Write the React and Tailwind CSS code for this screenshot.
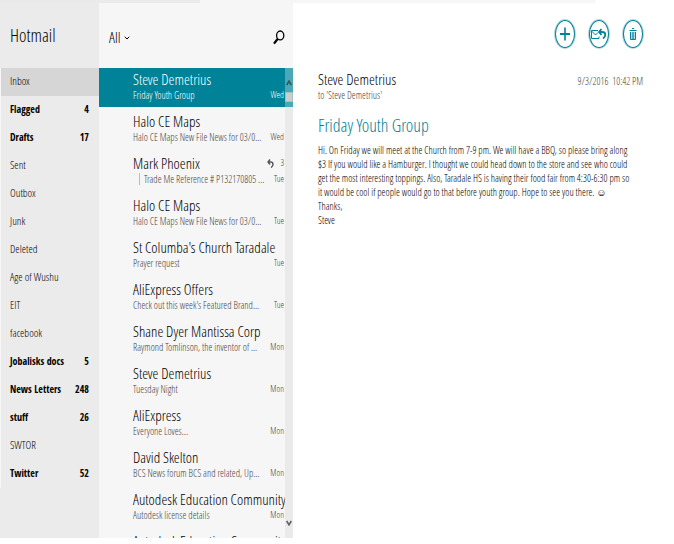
import { ChevronDown } from 'lucide-react'

const folders = [
  { name: 'Inbox', active: true },
  { name: 'Flagged', count: 4 },
  { name: 'Drafts', count: 17 },
  { name: 'Sent' },
  { name: 'Outbox' },
  { name: 'Junk' },
  { name: 'Deleted' },
  { name: 'Age of Wushu' },
  { name: 'EIT' },
  { name: 'facebook' },
  { name: 'Jobalisks docs', count: 5 },
  { name: 'News Letters', count: 248 },
  { name: 'stuff', count: 26 },
  { name: 'SWTOR' },
  { name: 'Twitter', count: 52 },
]

const messages = [
  { from: 'Steve Demetrius', preview: 'Friday Youth Group', day: 'Wed', active: true },
  { from: 'Halo CE Maps', preview: 'Halo CE Maps New File News for 03/0...', day: 'Wed' },
  { from: 'Mark Phoenix', preview: 'Trade Me Reference # P132170805 ...', day: 'Tue', replies: 3 },
  { from: 'Halo CE Maps', preview: 'Halo CE Maps New File News for 03/0...', day: 'Tue' },
  { from: "St Columba's Church Taradale", preview: 'Prayer request', day: 'Tue' },
  { from: 'AliExpress Offers', preview: "Check out this week's Featured Brand...", day: 'Tue' },
  { from: 'Shane Dyer Mantissa Corp', preview: 'Raymond Tomlinson, the inventor of ...', day: 'Mon' },
  { from: 'Steve Demetrius', preview: 'Tuesday Night', day: 'Mon' },
  { from: 'AliExpress', preview: 'Everyone Loves...', day: 'Mon' },
  { from: 'David Skelton', preview: 'BCS News forum BCS and related, Up...', day: 'Mon' },
  { from: 'Autodesk Education Community', preview: 'Autodesk license details', day: 'Mon' },
  { from: 'Autodesk Education Community' },
]

function ReplyIcon() {
  return (
    <svg width="7" height="9" viewBox="0 0 7 9" fill="none" stroke="#555" strokeWidth="1.4">
      <path d="M3 0.5 1 3l2 2.5M1 3h2.5C7 3 6.5 7 4 8.5" />
    </svg>
  )
}

function FolderRow({ folder }) {
  return (
    <li>
      <a
        href="#"
        className={`flex h-7 items-center justify-between pr-2.5 pb-0.5 pl-[9px] ${
          folder.active ? 'bg-[#d6d6d6]' : ''
        } ${
          folder.count
            ? "font-['Open_Sans_Condensed','Open_Sans',sans-serif] text-[10px] font-bold"
            : 'text-[11px]'
        }`}
      >
        <span>{folder.name}</span>
        {folder.count && <span>{folder.count}</span>}
      </a>
    </li>
  )
}

function MessageRow({ message }) {
  const { from, preview, day, active, replies } = message

  return (
    <li className="h-[42px] shrink-0">
      <a
        href="#"
        className={`block h-[39px] pt-px pr-px pl-[34px] whitespace-nowrap ${
          active ? 'bg-[#008299] text-white' : 'text-black'
        }`}
      >
        <div className="flex items-center justify-between">
          <span className="text-[15px] leading-5">{from}</span>
          {replies && (
            <span className="flex items-center gap-1.5 text-[9px] text-[#444]">
              <ReplyIcon />
              {replies}
            </span>
          )}
        </div>
        {preview && (
          <div
            className={`flex items-center justify-between text-[10px] leading-3 ${
              active ? '' : 'text-[#444]'
            }`}
          >
            <span className={replies ? 'ml-1.5 border-l border-[#b5bfc2] pl-1' : ''}>{preview}</span>
            <span className="text-[9px]">{day}</span>
          </div>
        )}
      </a>
    </li>
  )
}

function ListScrollbar() {
  return (
    <div className="flex w-2 shrink-0 flex-col bg-[#eaeaea]">
      <div className="flex h-[39px] flex-col items-center bg-[#4ca7b7]">
        <button type="button" aria-label="Scroll up" className="flex h-6 w-full items-center justify-center pt-1.5">
          <svg width="6" height="6" viewBox="0 0 6 6" fill="none" stroke="#34545b" strokeWidth="1.6">
            <path d="M0.7 5 3 1.2 5.3 5" />
          </svg>
        </button>
        <div className="h-2.5 w-full border border-[#a6bfc4] bg-[#cdcdcd]" />
      </div>
      <button type="button" aria-label="Scroll down" className="mt-auto mb-3 flex justify-center">
        <svg width="6" height="6" viewBox="0 0 6 6" fill="none" stroke="#606060" strokeWidth="1.6">
          <path d="M0.7 1 3 4.8 5.3 1" />
        </svg>
      </button>
    </div>
  )
}

function RoundButton({ label, children }) {
  return (
    <button
      type="button"
      aria-label={label}
      className="flex h-7 w-5 items-center justify-center rounded-[50%] border border-[#008299] text-[#008299] ring-1 ring-[#008299]/30"
    >
      {children}
    </button>
  )
}

export default function App() {
  return (
    <div className="flex h-screen flex-col overflow-hidden bg-white pb-1.5 font-['Open_Sans_Condensed_Light','Open_Sans_Condensed','Open_Sans',sans-serif] font-light text-black">
      <div className="flex h-[3px] shrink-0">
        <div className="w-[200px] bg-[#eaeaea]" />
        <div className="mr-[79px] flex-1 bg-[#f6f6f6]" />
      </div>

      <div className="flex min-h-0 flex-1">
        <nav className="w-[99px] shrink-0 bg-[#ebebeb]">
          <h1 className="flex h-[65px] items-center pl-2.5 text-[18px]">Hotmail</h1>
          <ul className="border-l border-[#f6f6f6]">
            {folders.map((folder) => (
              <FolderRow key={folder.name} folder={folder} />
            ))}
          </ul>
        </nav>

        <section className="flex w-[194px] shrink-0 flex-col bg-[#f6f6f6]">
          <header className="flex h-[65px] shrink-0 items-center justify-between pt-1 pr-2 pl-2.5">
            <button type="button" className="flex items-center gap-0.5 text-[15px]">
              All
              <ChevronDown className="size-2" strokeWidth={3} />
            </button>
            <button type="button" aria-label="Search">
              <svg width="12" height="15" viewBox="0 0 12 15" fill="none" stroke="#000">
                <ellipse cx="7.2" cy="5.4" rx="3.6" ry="4.4" strokeWidth="1.3" />
                <path d="M4.6 9 1 13.6" strokeWidth="2.2" />
              </svg>
            </button>
          </header>
          <div className="flex min-h-0 flex-1">
            <ul className="flex min-w-0 flex-1 flex-col overflow-hidden">
              {messages.map((message, i) => (
                <MessageRow key={i} message={message} />
              ))}
            </ul>
            <ListScrollbar />
          </div>
        </section>

        <main className="min-w-0 flex-1 pr-[31px] pl-[25px]">
          <div className="flex h-[65px] justify-end gap-3.5 pt-[17px]">
            <RoundButton label="New message">
              <svg width="10" height="14" viewBox="0 0 10 14" stroke="currentColor">
                <path d="M5 0.5v13" strokeWidth="1.6" />
                <path d="M0 7h10" strokeWidth="2" />
              </svg>
            </RoundButton>
            <RoundButton label="Respond">
              <svg width="16" height="12" viewBox="0 0 16 12" className="shrink-0" fill="none" stroke="currentColor">
                <path d="M7 2.5H0.5v8h7.500v-2M0.500 3l4 4 2.500-2.500" />
                <path d="M10.500 1 8 4l2.500 3M8 4h3c4.500 0 4 4.500 1 6.500" strokeWidth="1.8" />
              </svg>
            </RoundButton>
            <RoundButton label="Delete">
              <svg width="8" height="14" viewBox="0 0 8 14" fill="none" stroke="currentColor">
                <path d="M3 1.5h2M0.5 3.5h7M1.5 5v7.5h5V5M3.2 5v7M4.8 5v7" />
              </svg>
            </RoundButton>
          </div>

          <div className="flex items-center justify-between pt-px">
            <span className="text-[15px] leading-5">Steve Demetrius</span>
            <span className="pt-1 text-[10px] whitespace-pre text-[#444]">9/3/2016  10:42 PM</span>
          </div>
          <p className="text-[10px] leading-3 text-[#444]">to 'Steve Demetrius'</p>
          <h2 className="mt-3 text-[18px] leading-6 text-[#008299]">Friday Youth Group</h2>
          <div className="mt-1.5 text-[10px] leading-3.5 whitespace-nowrap">
            <p>
              Hi. On Friday we will meet at the Church from 7-9 pm. We will have a BBQ, so please bring along
              <br />
              $3 If you would like a Hamburger. I thought we could head down to the store and see who could
              <br />
              get the most interesting toppings. Also, Taradale HS is having their food fair from 4:30-6:30 pm so
              <br />
              it would be cool if people would go to that before youth group. Hope to see you there. ☺
            </p>
            <p>Thanks,</p>
            <p>Steve</p>
          </div>
        </main>
      </div>
    </div>
  )
}
